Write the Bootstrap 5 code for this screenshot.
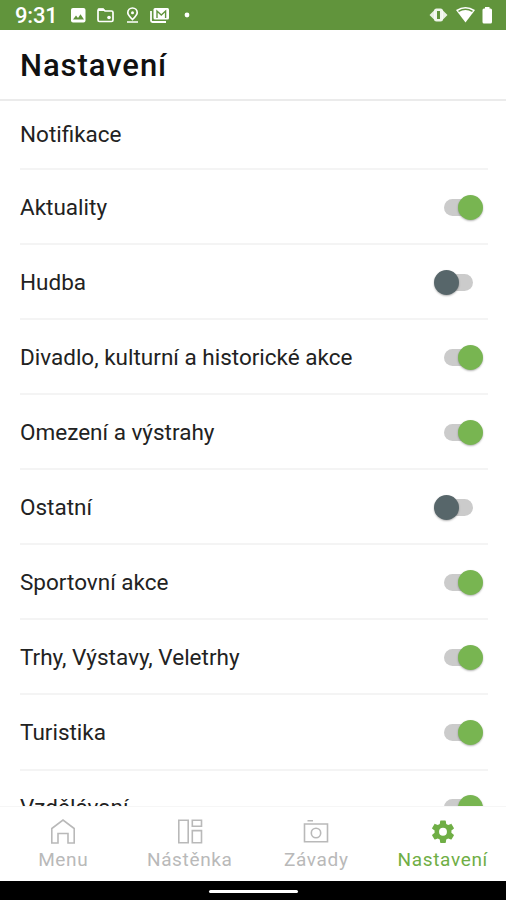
<!DOCTYPE html>
<html lang="cs">
<head>
<meta charset="utf-8">
<meta name="viewport" content="width=device-width, initial-scale=1">
<title>Nastavení</title>
<link href="https://cdn.jsdelivr.net/npm/bootstrap@5.3.0/dist/css/bootstrap.min.css" rel="stylesheet">
<style>
body{font-family:Roboto,"Liberation Sans",sans-serif;background:#fff;color:#222}
.phone{height:900px;overflow:hidden}
.statusbar{height:30px;background:#61943c;padding:0 12px 0 15px;color:#fff}
.clock{font-size:22px;font-weight:500;line-height:30px;width:56px;letter-spacing:-.2px;padding-top:1px}
.statusbar svg{display:block;flex:none}
.apphead{height:71px;padding:2px 20px 0;border-bottom:2px solid #ebebeb}
.apphead h1{font-size:31px;font-weight:500;letter-spacing:.95px;line-height:1;color:#111}
.settings{min-height:0;padding:0 18px 0 20px}
.setting{height:75.07px;flex:none;font-size:22.5px;border-bottom:2px solid #f4f4f4;padding:2px 15px 0 0}
.setting.heading{height:69px;padding-top:0}
.toggle{appearance:none;position:relative;width:29px;height:17px;margin:0 0 1px;border-radius:9px;background:#cbcbcb}
.toggle::before{content:"";position:absolute;top:-4px;left:-10px;width:25px;height:25px;border-radius:50%;background:#57666a;box-shadow:0 1px 2px rgba(0,0,0,.3)}
.toggle:checked::before{left:13.5px;background:#78b551}
.tabs{height:75px;border-top:1px solid #f6f6f6;background:#fff}
.tab{color:#b9b9b9;font-size:19px;letter-spacing:.65px;line-height:22px;padding-top:11px;text-decoration:none}
.tab svg{display:block;margin-bottom:4px}
.tab.current{color:#6fae45}
.homebar{height:19px;background:#000}
.pill{width:89px;height:3px;border-radius:2px;background:#fff;margin-top:2px}
</style>
</head>
<body>
<div class="phone d-flex flex-column">
  <div class="statusbar d-flex align-items-center flex-shrink-0">
    <span class="clock">9:31</span>
    <svg width="124" height="30" viewBox="71 0 124 30" fill="none" stroke="#fff">
      <path d="M73 8h10.500a2 2 0 0 1 2 2v10.500a2 2 0 0 1-2 2H73a2 2 0 0 1-2-2V10a2 2 0 0 1 2-2z" fill="#fff" stroke="none"/>
      <path d="M73 19.500l3-4 2 2.500 2.500-3.700 3.500 5.200z" fill="#61943c" stroke="none"/>
      <path d="M98 10.500V20q0 1.500 1.500 1.500h12q1.500 0 1.500-1.500v-7.500q0-1.500-1.500-1.500H105l-2-2h-3.500q-1.500 0-1.500 1.500z" stroke-width="1.700"/>
      <path d="M98 8.500h5.500l2 2.500H98z" fill="#fff" stroke="none"/><circle cx="109" cy="17.500" r="1.800" fill="#fff" stroke="none"/>
      <path d="M132.500 19.500c-3-3-4.700-4.700-4.700-6.800a4.700 4.700 0 0 1 9.400 0c0 2.100-1.700 3.800-4.700 6.800zM127 22h11" stroke-width="1.700"/><circle cx="132.500" cy="12.700" r="1.500" fill="#fff" stroke="none"/>
      <path d="M151 11v9.500q0 1.500 1.500 1.500H166" stroke-width="1.800"/>
      <path d="M155 8h12.500q1.500 0 1.500 1.500V18q0 1.500-1.500 1.500H155q-1.500 0-1.500-1.500V9.500Q153.500 8 155 8z" fill="#fff" stroke="none"/>
      <path d="M157 18v-7l4.300 4 4.300-4v7" stroke="#61943c" stroke-width="1.400"/>
      <circle cx="187" cy="15" r="2.400" fill="#fff" stroke="none"/>
    </svg>
    <svg class="ms-auto" width="65" height="30" viewBox="429 0 65 30" fill="#fff">
      <path d="M434.500 10v10L429.500 15zM442.500 10v10L447.500 15z" opacity=".85"/>
      <path d="M436.500 8.500h4q2.500 0 2.500 2.500v8q0 2.500-2.500 2.500h-4q-2.500 0-2.500-2.500v-8q0-2.500 2.500-2.500z" opacity=".9"/>
      <path d="M437 11h3v8h-3z" fill="#61943c"/>
      <path d="M465.500 22.500l-9.500-12.500q9.500-6 19 0z"/><path d="M458.500 11.300q7-4 14 0" fill="none" stroke="#61943c" stroke-width="1.500"/>
      <path d="M485 8.500V7h4.500v1.500h1q1.500 0 1.500 1.500v12q0 1.500-1.500 1.500H484q-1.500 0-1.500-1.500V10q0-1.500 1.500-1.500z"/>
    </svg>
  </div>
  <header class="apphead d-flex align-items-center flex-shrink-0"><h1 class="m-0">Nastavení</h1></header>
  <main class="settings d-flex flex-column flex-grow-1 overflow-hidden">
    <div class="setting heading d-flex align-items-center">Notifikace</div>
    <label class="setting d-flex align-items-center justify-content-between">Aktuality<input class="toggle" type="checkbox" role="switch" checked></label>
    <label class="setting d-flex align-items-center justify-content-between">Hudba<input class="toggle" type="checkbox" role="switch"></label>
    <label class="setting d-flex align-items-center justify-content-between">Divadlo, kulturní a historické akce<input class="toggle" type="checkbox" role="switch" checked></label>
    <label class="setting d-flex align-items-center justify-content-between">Omezení a výstrahy<input class="toggle" type="checkbox" role="switch" checked></label>
    <label class="setting d-flex align-items-center justify-content-between">Ostatní<input class="toggle" type="checkbox" role="switch"></label>
    <label class="setting d-flex align-items-center justify-content-between">Sportovní akce<input class="toggle" type="checkbox" role="switch" checked></label>
    <label class="setting d-flex align-items-center justify-content-between">Trhy, Výstavy, Veletrhy<input class="toggle" type="checkbox" role="switch" checked></label>
    <label class="setting d-flex align-items-center justify-content-between">Turistika<input class="toggle" type="checkbox" role="switch" checked></label>
    <label class="setting d-flex align-items-center justify-content-between">Vzdělávaní<input class="toggle" type="checkbox" role="switch" checked></label>
  </main>
  <nav class="tabs row g-0 flex-shrink-0">
    <a class="tab col-3 d-flex flex-column align-items-center" href="#"><svg width="26" height="27" viewBox="0 0 26 27" fill="none" stroke="currentColor" stroke-width="1.600"><path d="M1.800 25V10.500L13 2l11.200 8.500V25H18v-9.500H8V25z"/></svg>Menu</a>
    <a class="tab col-3 d-flex flex-column align-items-center" href="#"><svg width="26" height="27" viewBox="0 0 26 27" fill="none" stroke="currentColor" stroke-width="1.600"><path d="M1.800 2.300h9.400v22.400H1.800zM15.300 2.300h9.200v6h-9.200zM15.300 12.600h9.200v12.100h-9.200z"/></svg>Nástěnka</a>
    <a class="tab col-3 d-flex flex-column align-items-center" href="#"><svg width="26" height="27" viewBox="0 0 26 27" fill="none" stroke="currentColor" stroke-width="1.600"><path d="M1.500 6h23v17.800h-23zM4.500 2.700h5.500"/><circle cx="13" cy="15" r="4.700"/></svg>Závady</a>
    <a class="tab current col-3 d-flex flex-column align-items-center" href="#" aria-current="page"><svg width="30" height="27" viewBox="0 -1.200 24 24" fill="currentColor"><path transform="translate(0 -1)" d="M19.430 12.980c.04-.32.07-.64.07-.98s-.03-.66-.07-.98l2.110-1.650c.19-.15.24-.42.12-.64l-2-3.460c-.12-.22-.39-.3-.61-.22l-2.490 1c-.52-.4-1.080-.73-1.690-.98l-.38-2.650A.488.488 0 0 0 14 2h-4c-.25 0-.46.18-.49.42l-.38 2.650c-.61.25-1.170.59-1.690.98l-2.490-1c-.23-.09-.49 0-.61.22l-2 3.460c-.13.22-.07.49.12.64l2.110 1.650c-.04.32-.07.65-.07.98s.03.66.07.98l-2.110 1.650c-.19.15-.24.42-.12.64l2 3.460c.12.22.39.3.61.22l2.490-1c.52.4 1.080.73 1.690.98l.38 2.650c.03.24.24.42.49.42h4c.25 0 .46-.18.49-.42l.38-2.650c.61-.25 1.170-.59 1.690-.98l2.490 1c.23.09.49 0 .61-.22l2-3.460c.12-.22.07-.49-.12-.64zM12 15.500a3.500 3.500 0 1 1 0-7 3.500 3.500 0 0 1 0 7z"/></svg>Nastavení</a>
  </nav>
  <div class="homebar d-flex justify-content-center align-items-center flex-shrink-0"><div class="pill"></div></div>
</div>
<script src="https://cdn.jsdelivr.net/npm/bootstrap@5.3.0/dist/js/bootstrap.bundle.min.js"></script>
</body>
</html>
